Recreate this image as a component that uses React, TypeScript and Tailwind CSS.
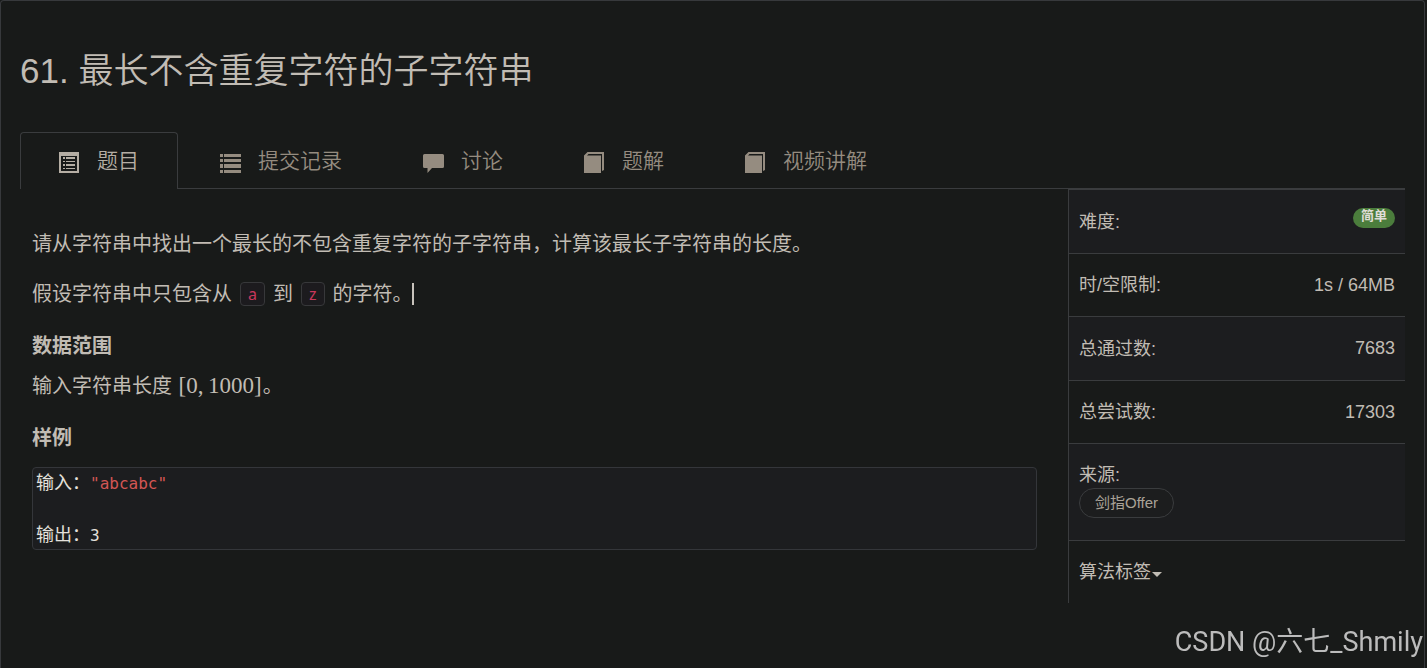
import type { ReactNode } from "react";
import clsx from "clsx";

type IconName = "listAlt" | "list" | "comment" | "book";

const tabs: { label: string; icon: IconName }[] = [
  { label: "题目", icon: "listAlt" },
  { label: "提交记录", icon: "list" },
  { label: "讨论", icon: "comment" },
  { label: "题解", icon: "book" },
  { label: "视频讲解", icon: "book" },
];

const stats: { label: string; value: ReactNode }[] = [
  {
    label: "难度:",
    value: (
      <span className="inline-block rounded-full bg-[#4b7d3c] px-2 pb-1 align-top text-[13px] leading-4 font-bold text-[#e0ddd8]">
        简单
      </span>
    ),
  },
  { label: "时/空限制:", value: "1s / 64MB" },
  { label: "总通过数:", value: "7683" },
  { label: "总尝试数:", value: "17303" },
];

function TabIcon({ name }: { name: IconName }) {
  return (
    <svg viewBox="0 0 21 21" className="mt-0.5 size-[21px]" fill="currentColor" shapeRendering="crispEdges" aria-hidden="true">
      {name === "listAlt" && (
        <>
          <path fillRule="evenodd" d="M0 0h20v21H0zM2 4v15h16V4z" />
          <path d="M4 5h2v2H4zM4 9h2v1H4zM4 12h2v2H4zM4 16h2v1H4zM7 5h9v2H7zM7 9h9v1H7zM7 12h9v2H7zM7 16h9v1H7z" />
        </>
      )}
      {name === "list" && (
        <path d="M0 2h3v3H0zM0 7h3v3H0zM0 12h3v4H0zM0 18h3v3H0zM4 2h17v3H4zM4 7h17v3H4zM4 12h17v4H4zM4 18h17v3H4z" />
      )}
      {name === "comment" && (
        <path shapeRendering="auto" d="M1.500 2h18a1.500 1.500 0 0 1 1.500 1.500v11a1.500 1.500 0 0 1-1.500 1.500H9l-4.500 5V16h-3A1.500 1.500 0 0 1 0 14.500v-11A1.500 1.500 0 0 1 1.500 2z" />
      )}
      {name === "book" && (
        <path shapeRendering="auto" d="M0 3.500L3.500 0H20v18l-2 1V2H4.500L3 3.500h14V21H0z" />
      )}
    </svg>
  );
}

function Code({ children }: { children: ReactNode }) {
  return (
    <code className="mx-2 inline-block rounded-sm border border-[#37383a] bg-[#1c1b1e] px-[7px] font-['Noto_Sans',sans-serif] text-base leading-[22px] text-[#c8385c]">
      {children}
    </code>
  );
}

function Statement() {
  return (
    <section className="min-w-0 flex-1 pt-[41px] pr-[31px] pl-3 text-xl leading-7">
      <p>请从字符串中找出一个最长的不包含重复字符的子字符串，计算该最长子字符串的长度。</p>
      <p className="mt-[22px] flex h-7 items-center">
        假设字符串中只包含从
        <Code>a</Code>到<Code>z</Code>
        的字符。
        <span className="-ml-px h-[22px] w-0.5 bg-[#c8c3bc]" />
      </p>
      <h2 className="mt-6 font-bold">数据范围</h2>
      <p className="mt-3">
        输入字符串长度{" "}
        <span className="mx-px font-['Liberation_Serif',serif] text-[23px] leading-7">[0,&thinsp;1000]</span>。
      </p>
      <h2 className="mt-6 font-bold">样例</h2>
      <pre className="mt-[15px] rounded-sm border border-[#34363a] bg-[#1c1d1f] px-[3px] pb-[3px] font-['Noto_Sans_CJK_SC',monospace] text-lg leading-[26px] text-[#e4e1dc]">
        输入：
        <span className="font-['DejaVu_Sans_Mono',monospace] text-base leading-5 text-[#d35654]">"abcabc"</span>
        {"\n\n输出："}
        <span className="font-['DejaVu_Sans_Mono',monospace] text-base leading-5">3</span>
      </pre>
    </section>
  );
}

function Sidebar() {
  return (
    <aside className="w-[337px] shrink-0 border-l border-[#3a3c3e] text-lg leading-[26px]">
      <table className="w-full border-collapse">
        <tbody>
          {stats.map((s) => (
            <tr key={s.label} className="border-t border-[#3a3c3e] odd:h-16 odd:bg-[#1c1d1f]">
              <th scope="row" className="px-[10px] py-[18px] text-left font-normal">
                {s.label}
              </th>
              <td className="px-[10px] py-[18px] text-right align-top">{s.value}</td>
            </tr>
          ))}
          <tr className="border-t border-[#3a3c3e] bg-[#1c1d1f]">
            <td colSpan={2} className="px-[10px] pt-[18px] pb-[22px]">
              <div>来源:</div>
              <a
                href="#source"
                className="flex w-fit rounded-full border border-[#3a3c3e] bg-[#1c1d1e] px-[15px] text-[15px] leading-7 text-[#aaa398]"
              >
                剑指Offer
              </a>
            </td>
          </tr>
          <tr className="border-t border-[#3a3c3e]">
            <td colSpan={2} className="px-[10px] py-[18px]">
              <button type="button" className="flex items-center gap-px">
                算法标签
                <svg viewBox="0 0 10 5" className="mt-1 h-[5px] w-[10px]" fill="currentColor" aria-hidden="true">
                  <path d="M0 0h10L5 5z" />
                </svg>
              </button>
            </td>
          </tr>
        </tbody>
      </table>
    </aside>
  );
}

export default function App() {
  return (
    <div className="min-h-screen bg-[#181a19] pr-0.5 font-['Liberation_Sans','Noto_Sans_CJK_SC',sans-serif] text-[#c1bcb4]">
      <main className="min-h-screen rounded-t-sm border border-b-0 border-[#37393c] px-[19px]">
        <h1 className="pt-11 text-[35px] leading-[52px] font-[350]">61. 最长不含重复字符的子字符串</h1>

        <nav className="mt-[35px] flex gap-[3px] border-b border-[#3a3c3e]">
          {tabs.map((tab, i) => (
            <a
              key={tab.label}
              href="#tab"
              className={clsx(
                "-mb-px flex h-[57px] items-center gap-[17px] rounded-t border border-b-0 px-[38px] text-[21px] font-[350]",
                i === 0
                  ? "border-[#3a3c3e] bg-[#181a19] text-[#b5aea4]"
                  : "border-transparent text-[#958c80]",
              )}
            >
              <TabIcon name={tab.icon} />
              {tab.label}
            </a>
          ))}
        </nav>

        <div className="flex items-start">
          <Statement />
          <Sidebar />
        </div>
      </main>

      <div className="fixed right-1 bottom-1 font-['Roboto','Noto_Sans_CJK_SC',sans-serif] text-[27px] leading-[44px] text-[#bcbcbc]">
        CSDN @六七_Shmily
      </div>
    </div>
  );
}
